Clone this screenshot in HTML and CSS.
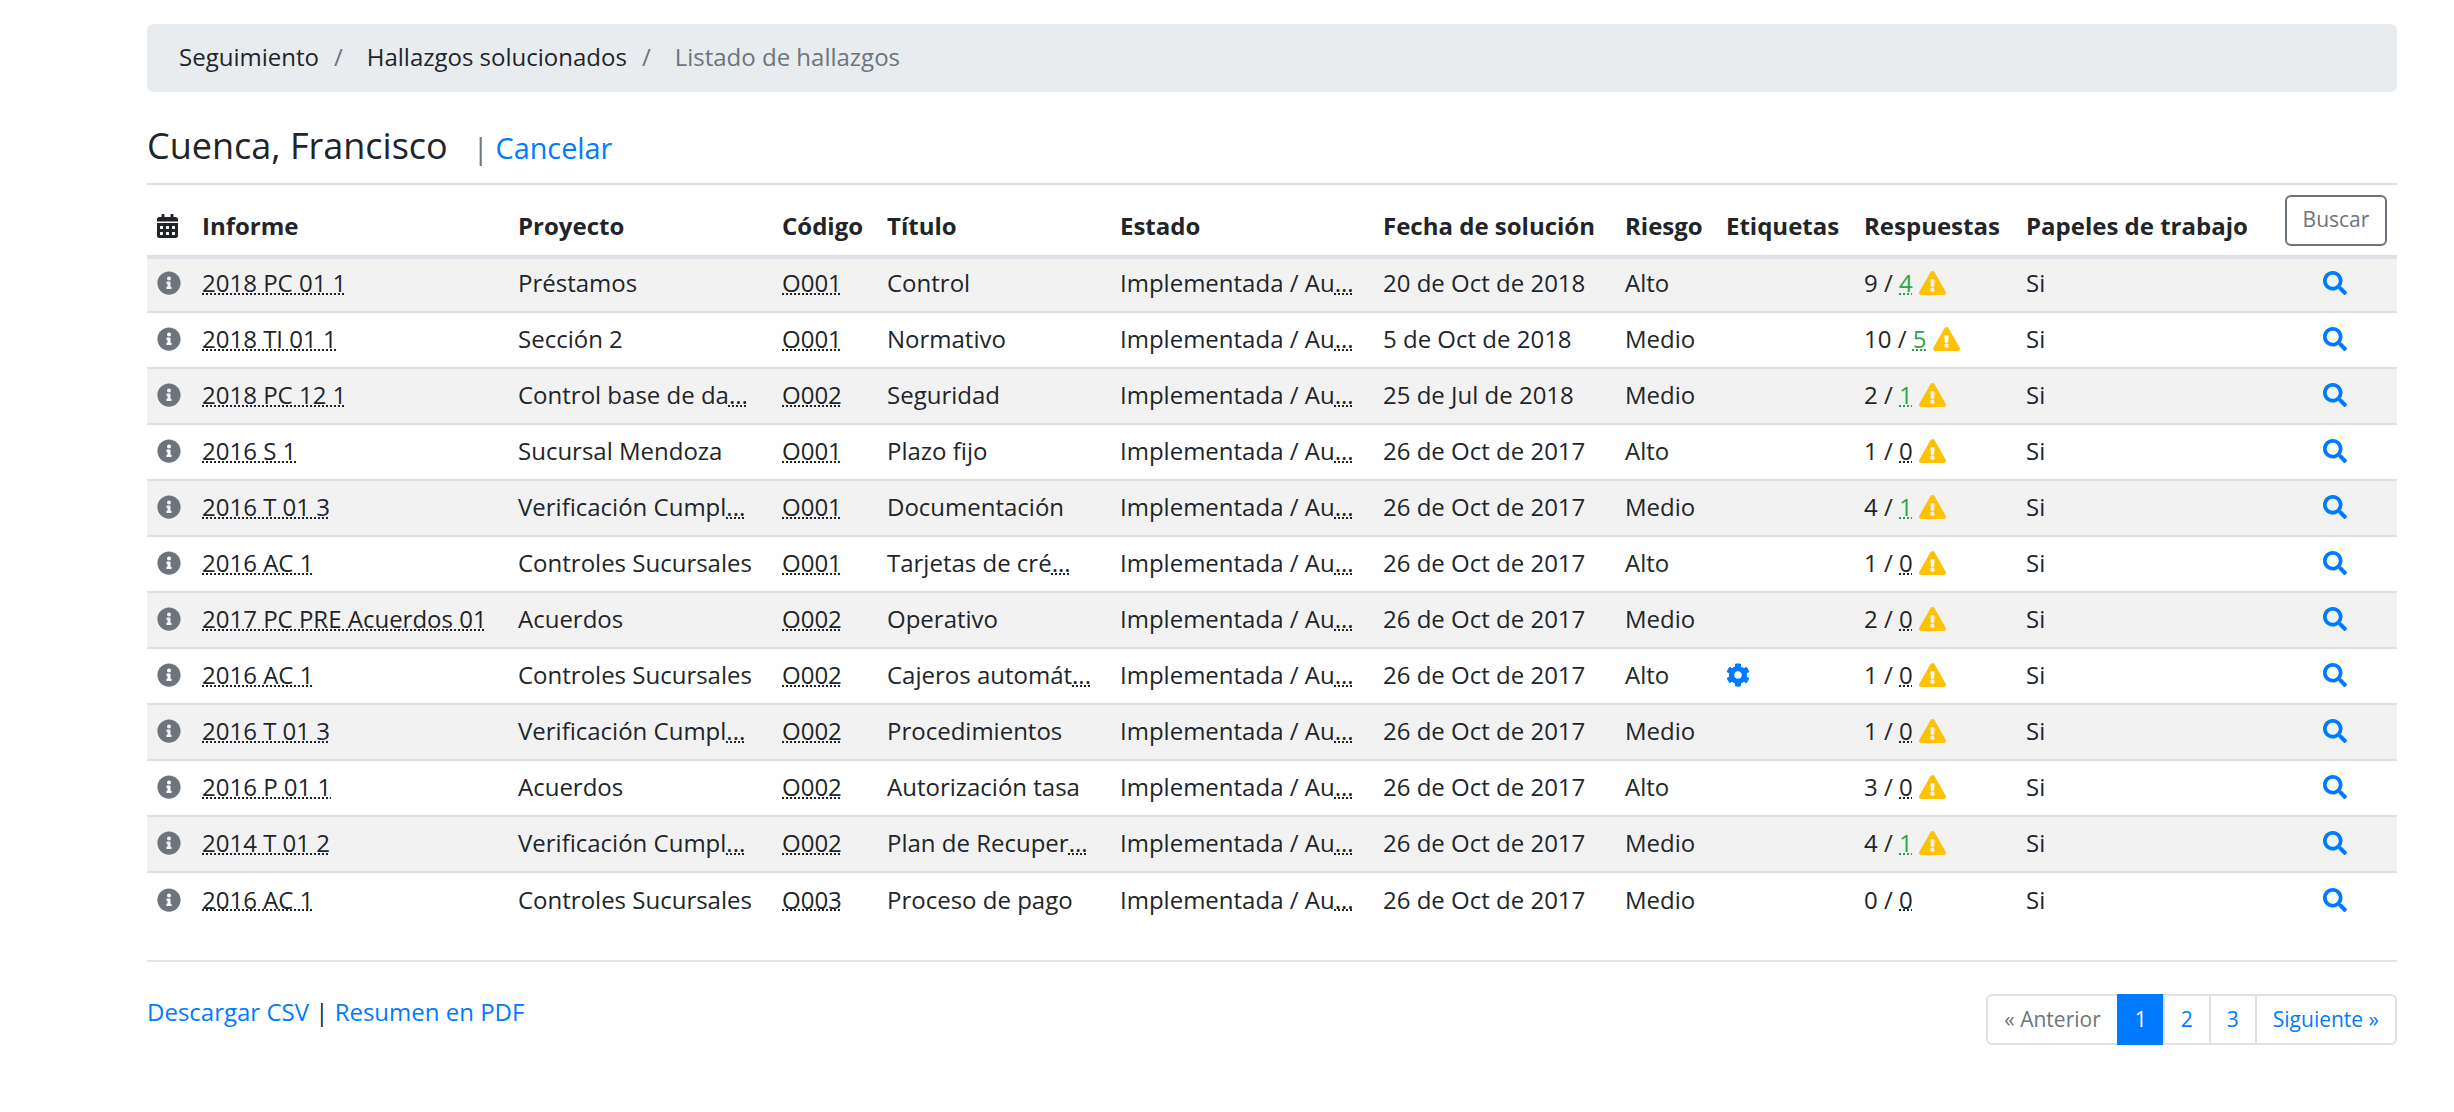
FILE: index.html
```html
<!DOCTYPE html>
<html lang="es">
<head>
    <meta charset="UTF-8">
    <meta name="viewport" content="width=device-width, initial-scale=1.0">
    <title>Listado de hallazgos</title>
    <link rel="stylesheet" href="styles.css">
</head>
<body>
    <svg class="sprites" xmlns="http://www.w3.org/2000/svg">
        <symbol id="i-info" viewBox="0 0 512 512"><path d="M256 8C119.043 8 8 119.083 8 256c0 136.997 111.043 248 248 248s248-111.003 248-248C504 119.083 392.957 8 256 8zm0 110c23.196 0 42 18.804 42 42s-18.804 42-42 42-42-18.804-42-42 18.804-42 42-42zm56 254c0 6.627-5.373 12-12 12h-88c-6.627 0-12-5.373-12-12v-24c0-6.627 5.373-12 12-12h12v-64h-12c-6.627 0-12-5.373-12-12v-24c0-6.627 5.373-12 12-12h64c6.627 0 12 5.373 12 12v100h12c6.627 0 12 5.373 12 12v24z"/></symbol>
        <symbol id="i-search" viewBox="0 0 512 512"><path d="M505 442.7L405.3 343c-4.5-4.5-10.6-7-17-7H372c27.6-35.3 44-79.7 44-128C416 93.1 322.9 0 208 0S0 93.1 0 208s93.1 208 208 208c48.3 0 92.7-16.4 128-44v16.3c0 6.4 2.5 12.5 7 17l99.7 99.7c9.4 9.4 24.6 9.4 33.9 0l28.3-28.3c9.4-9.4 9.4-24.6.1-34zM208 336c-70.7 0-128-57.2-128-128 0-70.7 57.2-128 128-128 70.7 0 128 57.2 128 128 0 70.7-57.2 128-128 128z"/></symbol>
        <symbol id="i-warn" viewBox="0 0 576 512"><path d="M569.517 440.013C587.975 472.007 564.806 512 527.94 512H48.054c-36.937 0-59.999-40.055-41.577-71.987L246.423 23.985c18.467-32.009 64.72-31.951 83.154 0l239.94 416.028zM288 354c-25.405 0-46 20.595-46 46s20.595 46 46 46 46-20.595 46-46-20.595-46-46-46zm-43.673-165.346l7.418 136c.347 6.364 5.609 11.346 11.982 11.346h48.546c6.373 0 11.635-4.982 11.982-11.346l7.418-136c.375-6.874-5.098-12.654-11.982-12.654h-63.383c-6.884 0-12.356 5.78-11.981 12.654z"/></symbol>
        <symbol id="i-calendar" viewBox="0 0 448 512"><path d="M0 464c0 26.5 21.5 48 48 48h352c26.5 0 48-21.5 48-48V192H0v272zm320-196c0-6.6 5.4-12 12-12h40c6.6 0 12 5.4 12 12v40c0 6.6-5.4 12-12 12h-40c-6.6 0-12-5.4-12-12v-40zm0 128c0-6.6 5.4-12 12-12h40c6.6 0 12 5.4 12 12v40c0 6.6-5.4 12-12 12h-40c-6.6 0-12-5.4-12-12v-40zM192 268c0-6.6 5.4-12 12-12h40c6.6 0 12 5.4 12 12v40c0 6.6-5.4 12-12 12h-40c-6.6 0-12-5.4-12-12v-40zm0 128c0-6.6 5.4-12 12-12h40c6.6 0 12 5.4 12 12v40c0 6.6-5.4 12-12 12h-40c-6.6 0-12-5.4-12-12v-40zM64 268c0-6.6 5.4-12 12-12h40c6.6 0 12 5.4 12 12v40c0 6.6-5.4 12-12 12H76c-6.6 0-12-5.4-12-12v-40zm0 128c0-6.6 5.4-12 12-12h40c6.6 0 12 5.4 12 12v40c0 6.6-5.4 12-12 12H76c-6.6 0-12-5.4-12-12v-40zM400 64h-48V16c0-8.8-7.2-16-16-16h-32c-8.8 0-16 7.2-16 16v48H160V16c0-8.8-7.2-16-16-16h-32c-8.8 0-16 7.2-16 16v48H48C21.5 64 0 85.5 0 112v48h448v-48c0-26.5-21.5-48-48-48z"/></symbol>
        <symbol id="i-cog" viewBox="0 0 512 512"><path d="M487.4 315.7l-42.6-24.6c4.3-23.2 4.3-47 0-70.2l42.6-24.6c4.9-2.8 7.1-8.6 5.5-14-11.1-35.6-30-67.8-54.7-94.6-3.8-4.1-10-5.1-14.8-2.3L380.8 110c-17.9-15.4-38.5-27.3-60.8-35.1V25.8c0-5.6-3.9-10.5-9.4-11.7-36.7-8.2-74.3-7.8-109.2 0-5.5 1.2-9.4 6.1-9.4 11.7V75c-22.2 7.9-42.8 19.8-60.8 35.1L88.7 85.5c-4.9-2.8-11-1.9-14.8 2.3-24.7 26.7-43.6 58.9-54.7 94.6-1.7 5.4.6 11.2 5.5 14L67.3 221c-4.3 23.2-4.3 47 0 70.2l-42.6 24.6c-4.9 2.8-7.1 8.6-5.5 14 11.1 35.6 30 67.8 54.7 94.6 3.8 4.1 10 5.1 14.8 2.3l42.6-24.6c17.9 15.4 38.5 27.3 60.8 35.1v49.2c0 5.6 3.9 10.5 9.4 11.7 36.7 8.2 74.3 7.8 109.2 0 5.5-1.2 9.4-6.1 9.4-11.7v-49.2c22.2-7.9 42.8-19.8 60.8-35.1l42.6 24.6c4.9 2.8 11 1.9 14.8-2.3 24.7-26.7 43.6-58.9 54.7-94.6 1.5-5.5-.7-11.3-5.6-14.1zM256 336c-44.1 0-80-35.9-80-80s35.9-80 80-80 80 35.9 80 80-35.9 80-80 80z"/></symbol>
    </svg>

    <main class="page">
        <nav class="breadcrumb">
            <a href="#">Seguimiento</a>
            <span class="crumb-sep">/</span>
            <a href="#">Hallazgos solucionados</a>
            <span class="crumb-sep">/</span>
            <span class="crumb-active">Listado de hallazgos</span>
        </nav>

        <div class="title-row">
            <h1>Cuenca, Francisco</h1>
            <span class="title-sep">|</span>
            <a href="#" class="link">Cancelar</a>
        </div>

        <table class="findings">
            <colgroup>
                <col class="c-icon"><col class="c-report"><col class="c-project"><col class="c-code"><col class="c-title"><col class="c-state"><col class="c-date"><col class="c-risk"><col class="c-tags"><col class="c-answers"><col class="c-papers"><col class="c-action">
            </colgroup>
            <thead>
                <tr>
                    <th><svg class="icon icon-calendar"><use href="#i-calendar"/></svg></th>
                    <th>Informe</th>
                    <th>Proyecto</th>
                    <th>Código</th>
                    <th>Título</th>
                    <th>Estado</th>
                    <th>Fecha de solución</th>
                    <th>Riesgo</th>
                    <th>Etiquetas</th>
                    <th>Respuestas</th>
                    <th>Papeles de trabajo</th>
                    <th><button class="btn-search">Buscar</button></th>
                </tr>
            </thead>
            <tbody>
                <tr>
                    <td><svg class="icon icon-info"><use href="#i-info"/></svg></td>
                    <td><abbr>2018 PC 01 1</abbr></td>
                    <td>Préstamos</td>
                    <td><abbr>O001</abbr></td>
                    <td>Control</td>
                    <td>Implementada / Au<abbr>...</abbr></td>
                    <td>20 de Oct de 2018</td>
                    <td>Alto</td>
                    <td></td>
                    <td>9 / <abbr class="ok">4</abbr> <svg class="icon icon-warn"><use href="#i-warn"/></svg></td>
                    <td>Si</td>
                    <td class="cell-action"><svg class="icon icon-search"><use href="#i-search"/></svg></td>
                </tr>
                <tr>
                    <td><svg class="icon icon-info"><use href="#i-info"/></svg></td>
                    <td><abbr>2018 TI 01 1</abbr></td>
                    <td>Sección 2</td>
                    <td><abbr>O001</abbr></td>
                    <td>Normativo</td>
                    <td>Implementada / Au<abbr>...</abbr></td>
                    <td>5 de Oct de 2018</td>
                    <td>Medio</td>
                    <td></td>
                    <td>10 / <abbr class="ok">5</abbr> <svg class="icon icon-warn"><use href="#i-warn"/></svg></td>
                    <td>Si</td>
                    <td class="cell-action"><svg class="icon icon-search"><use href="#i-search"/></svg></td>
                </tr>
                <tr>
                    <td><svg class="icon icon-info"><use href="#i-info"/></svg></td>
                    <td><abbr>2018 PC 12 1</abbr></td>
                    <td>Control base de da<abbr>...</abbr></td>
                    <td><abbr>O002</abbr></td>
                    <td>Seguridad</td>
                    <td>Implementada / Au<abbr>...</abbr></td>
                    <td>25 de Jul de 2018</td>
                    <td>Medio</td>
                    <td></td>
                    <td>2 / <abbr class="ok">1</abbr> <svg class="icon icon-warn"><use href="#i-warn"/></svg></td>
                    <td>Si</td>
                    <td class="cell-action"><svg class="icon icon-search"><use href="#i-search"/></svg></td>
                </tr>
                <tr>
                    <td><svg class="icon icon-info"><use href="#i-info"/></svg></td>
                    <td><abbr>2016 S 1</abbr></td>
                    <td>Sucursal Mendoza</td>
                    <td><abbr>O001</abbr></td>
                    <td>Plazo fijo</td>
                    <td>Implementada / Au<abbr>...</abbr></td>
                    <td>26 de Oct de 2017</td>
                    <td>Alto</td>
                    <td></td>
                    <td>1 / <abbr>0</abbr> <svg class="icon icon-warn"><use href="#i-warn"/></svg></td>
                    <td>Si</td>
                    <td class="cell-action"><svg class="icon icon-search"><use href="#i-search"/></svg></td>
                </tr>
                <tr>
                    <td><svg class="icon icon-info"><use href="#i-info"/></svg></td>
                    <td><abbr>2016 T 01 3</abbr></td>
                    <td>Verificación Cumpl<abbr>...</abbr></td>
                    <td><abbr>O001</abbr></td>
                    <td>Documentación</td>
                    <td>Implementada / Au<abbr>...</abbr></td>
                    <td>26 de Oct de 2017</td>
                    <td>Medio</td>
                    <td></td>
                    <td>4 / <abbr class="ok">1</abbr> <svg class="icon icon-warn"><use href="#i-warn"/></svg></td>
                    <td>Si</td>
                    <td class="cell-action"><svg class="icon icon-search"><use href="#i-search"/></svg></td>
                </tr>
                <tr>
                    <td><svg class="icon icon-info"><use href="#i-info"/></svg></td>
                    <td><abbr>2016 AC 1</abbr></td>
                    <td>Controles Sucursales</td>
                    <td><abbr>O001</abbr></td>
                    <td>Tarjetas de cré<abbr>...</abbr></td>
                    <td>Implementada / Au<abbr>...</abbr></td>
                    <td>26 de Oct de 2017</td>
                    <td>Alto</td>
                    <td></td>
                    <td>1 / <abbr>0</abbr> <svg class="icon icon-warn"><use href="#i-warn"/></svg></td>
                    <td>Si</td>
                    <td class="cell-action"><svg class="icon icon-search"><use href="#i-search"/></svg></td>
                </tr>
                <tr>
                    <td><svg class="icon icon-info"><use href="#i-info"/></svg></td>
                    <td><abbr>2017 PC PRE Acuerdos 01</abbr></td>
                    <td>Acuerdos</td>
                    <td><abbr>O002</abbr></td>
                    <td>Operativo</td>
                    <td>Implementada / Au<abbr>...</abbr></td>
                    <td>26 de Oct de 2017</td>
                    <td>Medio</td>
                    <td></td>
                    <td>2 / <abbr>0</abbr> <svg class="icon icon-warn"><use href="#i-warn"/></svg></td>
                    <td>Si</td>
                    <td class="cell-action"><svg class="icon icon-search"><use href="#i-search"/></svg></td>
                </tr>
                <tr>
                    <td><svg class="icon icon-info"><use href="#i-info"/></svg></td>
                    <td><abbr>2016 AC 1</abbr></td>
                    <td>Controles Sucursales</td>
                    <td><abbr>O002</abbr></td>
                    <td>Cajeros automát<abbr>...</abbr></td>
                    <td>Implementada / Au<abbr>...</abbr></td>
                    <td>26 de Oct de 2017</td>
                    <td>Alto</td>
                    <td><svg class="icon icon-cog"><use href="#i-cog"/></svg></td>
                    <td>1 / <abbr>0</abbr> <svg class="icon icon-warn"><use href="#i-warn"/></svg></td>
                    <td>Si</td>
                    <td class="cell-action"><svg class="icon icon-search"><use href="#i-search"/></svg></td>
                </tr>
                <tr>
                    <td><svg class="icon icon-info"><use href="#i-info"/></svg></td>
                    <td><abbr>2016 T 01 3</abbr></td>
                    <td>Verificación Cumpl<abbr>...</abbr></td>
                    <td><abbr>O002</abbr></td>
                    <td>Procedimientos</td>
                    <td>Implementada / Au<abbr>...</abbr></td>
                    <td>26 de Oct de 2017</td>
                    <td>Medio</td>
                    <td></td>
                    <td>1 / <abbr>0</abbr> <svg class="icon icon-warn"><use href="#i-warn"/></svg></td>
                    <td>Si</td>
                    <td class="cell-action"><svg class="icon icon-search"><use href="#i-search"/></svg></td>
                </tr>
                <tr>
                    <td><svg class="icon icon-info"><use href="#i-info"/></svg></td>
                    <td><abbr>2016 P 01 1</abbr></td>
                    <td>Acuerdos</td>
                    <td><abbr>O002</abbr></td>
                    <td>Autorización tasa</td>
                    <td>Implementada / Au<abbr>...</abbr></td>
                    <td>26 de Oct de 2017</td>
                    <td>Alto</td>
                    <td></td>
                    <td>3 / <abbr>0</abbr> <svg class="icon icon-warn"><use href="#i-warn"/></svg></td>
                    <td>Si</td>
                    <td class="cell-action"><svg class="icon icon-search"><use href="#i-search"/></svg></td>
                </tr>
                <tr>
                    <td><svg class="icon icon-info"><use href="#i-info"/></svg></td>
                    <td><abbr>2014 T 01 2</abbr></td>
                    <td>Verificación Cumpl<abbr>...</abbr></td>
                    <td><abbr>O002</abbr></td>
                    <td>Plan de Recuper<abbr>...</abbr></td>
                    <td>Implementada / Au<abbr>...</abbr></td>
                    <td>26 de Oct de 2017</td>
                    <td>Medio</td>
                    <td></td>
                    <td>4 / <abbr class="ok">1</abbr> <svg class="icon icon-warn"><use href="#i-warn"/></svg></td>
                    <td>Si</td>
                    <td class="cell-action"><svg class="icon icon-search"><use href="#i-search"/></svg></td>
                </tr>
                <tr>
                    <td><svg class="icon icon-info"><use href="#i-info"/></svg></td>
                    <td><abbr>2016 AC 1</abbr></td>
                    <td>Controles Sucursales</td>
                    <td><abbr>O003</abbr></td>
                    <td>Proceso de pago</td>
                    <td>Implementada / Au<abbr>...</abbr></td>
                    <td>26 de Oct de 2017</td>
                    <td>Medio</td>
                    <td></td>
                    <td>0 / <abbr>0</abbr></td>
                    <td>Si</td>
                    <td class="cell-action"><svg class="icon icon-search"><use href="#i-search"/></svg></td>
                </tr>
            </tbody>
        </table>

        <hr class="divider">

        <footer class="bottom">
            <div class="downloads">
                <a href="#" class="link">Descargar CSV</a> | <a href="#" class="link">Resumen en PDF</a>
            </div>
            <ul class="pagination">
                <li class="page-prev">« Anterior</li>
                <li class="page-current">1</li>
                <li>2</li>
                <li>3</li>
                <li>Siguiente »</li>
            </ul>
        </footer>
    </main>
</body>
</html>
```

FILE: styles.css
```css
* {
    box-sizing: border-box;
}
body {
    margin: 0;
    background-color: #fff;
    color: #212529;
    font-family: 'Open Sans', sans-serif;
    font-size: 24px;
    line-height: 1.5;
}
.sprites {
    display: none;
}
.page {
    padding: 24px 57px 0 147px;
}
.link {
    color: #007bff;
    text-decoration: none;
}

/* breadcrumb */
.breadcrumb {
    display: flex;
    align-items: center;
    height: 68px;
    padding: 0 32px 2px;
    background-color: #e9ecef;
    border-radius: 6px;
}
.breadcrumb a {
    color: #212529;
    text-decoration: none;
}
.crumb-sep {
    padding: 0 24px 0 15px;
    color: #6c757d;
}
.crumb-active {
    color: #6c757d;
}

/* title */
.title-row {
    display: flex;
    align-items: baseline;
    height: 91px;
    padding-top: 32px;
}
.title-row h1 {
    margin: 0;
    font-size: 36px;
    font-weight: 400;
    line-height: 1.2;
}
.title-sep {
    margin-left: 25px;
    margin-right: 7px;
    font-size: 28.8px;
    color: #6c757d;
}
.title-row .link {
    font-size: 28.8px;
}

/* table */
.findings {
    width: 2250px;
    table-layout: fixed;
    border-collapse: collapse;
    border-top: 2px solid #dee2e6;
}
.c-icon { width: 44px; }
.c-report { width: 316px; }
.c-project { width: 264px; }
.c-code { width: 105px; }
.c-title { width: 233px; }
.c-state { width: 263px; }
.c-date { width: 242px; }
.c-risk { width: 101px; }
.c-tags { width: 138px; }
.c-answers { width: 162px; }
.c-papers { width: 260px; }
.c-action { width: 122px; }
.findings th {
    height: 73px;
    padding: 0 10px 11px 11px;
    text-align: left;
    vertical-align: bottom;
    font-weight: 700;
    white-space: nowrap;
    border-bottom: 4px solid #dee2e6;
}
.findings td {
    height: 56px;
    padding: 0 10px 2px 11px;
    white-space: nowrap;
    border-top: 2px solid #dee2e6;
}
.findings th:first-child,
.findings td:first-child {
    padding-left: 10px;
}
.findings th:last-child {
    padding-bottom: 9px;
    padding-left: 10px;
}
.findings thead + tbody tr:first-child td {
    border-top: 0;
    height: 55px;
    padding-bottom: 4px;
}
.findings tbody tr:nth-child(odd) {
    background-color: #f2f2f2;
}
.findings td.cell-action {
    padding-left: 10px;
    padding-right: 12px;
    text-align: center;
}
abbr {
    text-decoration: underline dotted;
    text-decoration-thickness: 2px;
    text-decoration-skip-ink: none;
}
abbr.ok {
    color: #28a745;
}

/* icons */
.icon {
    display: inline-block;
    vertical-align: -3px;
    fill: currentColor;
}
.icon-calendar {
    width: 21px;
    height: 24px;
}
.icon-info {
    width: 24px;
    height: 24px;
    color: #6c757d;
}
.icon-search {
    width: 24px;
    height: 24px;
    color: #007bff;
}
.icon-warn {
    width: 27px;
    height: 24px;
    color: #ffc107;
}
.icon-cog {
    width: 24px;
    height: 24px;
    color: #007bff;
}

.btn-search {
    display: block;
    width: 102px;
    height: 51px;
    padding: 0 0 3px;
    font-family: inherit;
    font-size: 21px;
    color: #6c757d;
    background-color: transparent;
    border: 2px solid #6c757d;
    border-radius: 6px;
}

/* bottom */
.divider {
    height: 2px;
    margin: 32px 0 32px;
    background-color: #e4e6e8;
    border: 0;
}
.bottom {
    display: flex;
    justify-content: space-between;
    align-items: flex-start;
}
.pagination {
    display: flex;
    margin: 0;
    padding: 0;
    list-style: none;
    font-size: 21px;
    color: #007bff;
}
.pagination li {
    height: 51px;
    padding: 0 16px;
    line-height: 47px;
    border: 2px solid #dee2e6;
    margin-left: -2px;
}
.pagination li:first-child {
    border-radius: 6px 0 0 6px;
}
.pagination li:last-child {
    border-radius: 0 6px 6px 0;
}
.pagination .page-prev {
    color: #6c757d;
}
.pagination .page-current {
    color: #fff;
    background-color: #007bff;
    border-color: #007bff;
}
```
